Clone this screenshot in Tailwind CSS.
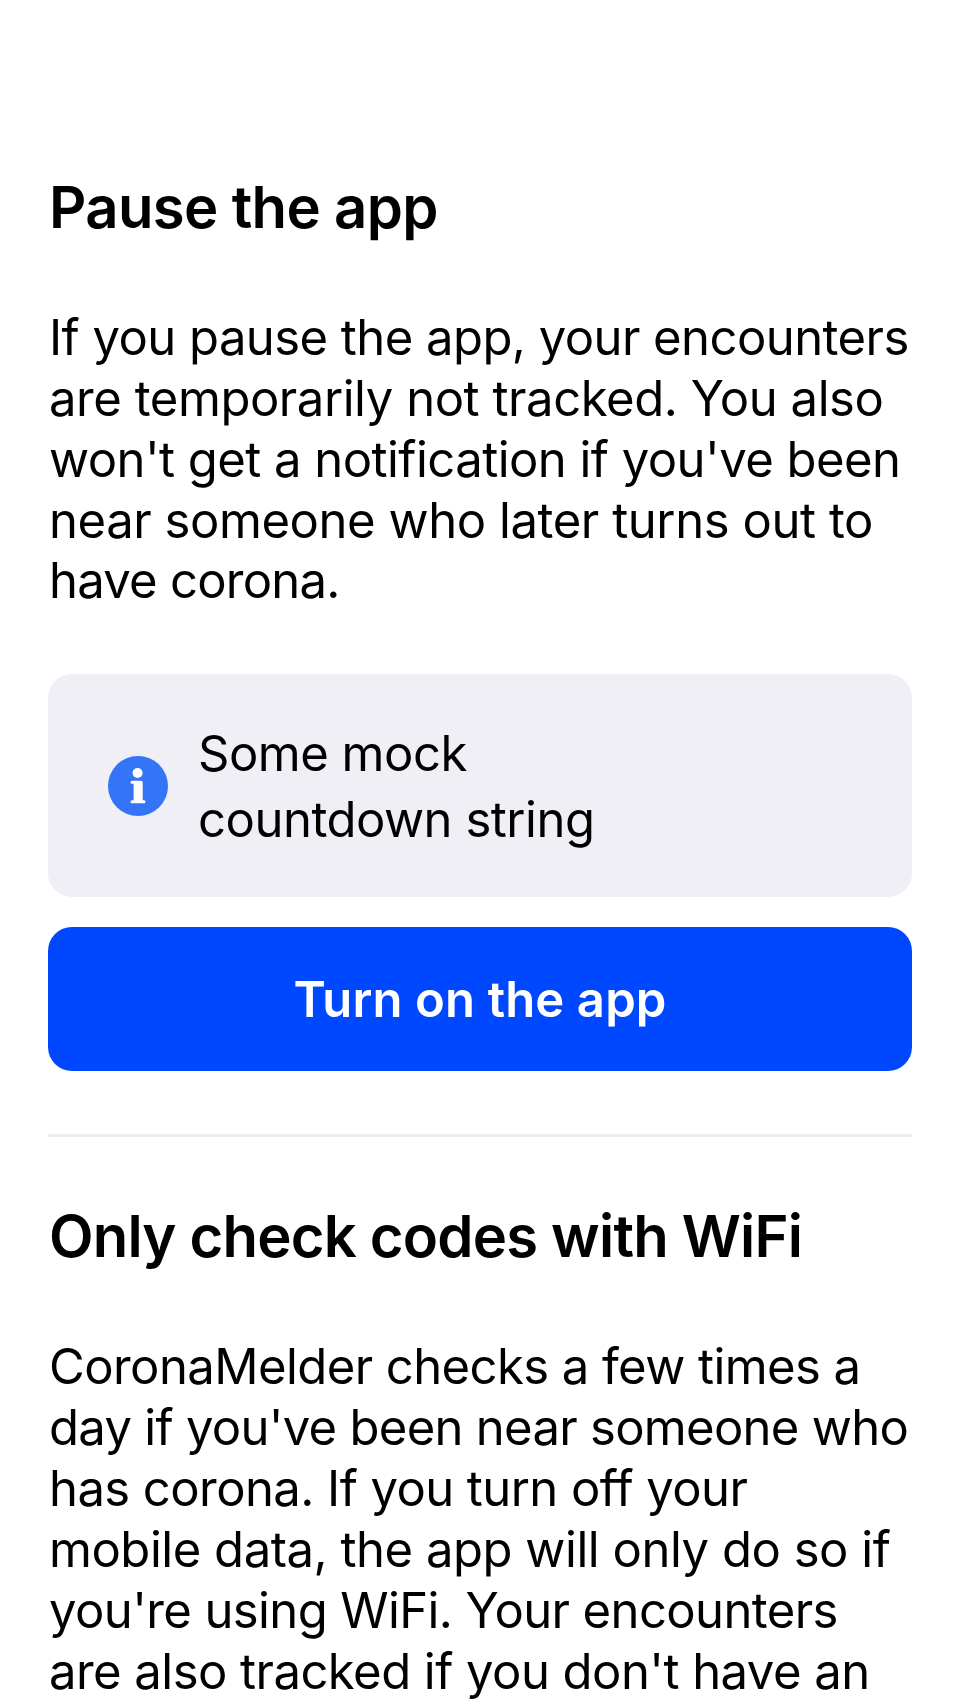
<!DOCTYPE html>
<html lang="en">
<head>
<meta charset="utf-8">
<title>Pause the app</title>
<script src="https://cdn.jsdelivr.net/npm/@tailwindcss/browser@4"></script>
</head>
<body class="bg-white">
<main class="flex h-[1704px] w-[960px] flex-col overflow-hidden bg-white px-12 pt-[172px] font-['Inter',sans-serif] text-[49px] leading-[61px] text-black">
  <section class="flex shrink-0 flex-col">
    <h1 class="whitespace-nowrap pl-px text-[58px] font-semibold leading-[70px] tracking-[-0.64px]">Pause the app</h1>
    <p class="mt-[65px] h-[304px] whitespace-nowrap pl-px">
      <span class="block tracking-[-0.55px]">If you pause the app, your encounters</span>
      <span class="block tracking-[-0.45px]">are temporarily not tracked. You also</span>
      <span class="block tracking-[-0.54px]">won't get a notification if you've been</span>
      <span class="block tracking-[-0.43px]">near someone who later turns out to</span>
      <span class="block leading-[60px] tracking-[-0.76px]">have corona.</span>
    </p>
    <div class="mt-[63px] flex h-[223px] items-center gap-[30px] rounded-3xl bg-[#f0eff5] pl-[60px]">
      <svg class="size-[60px] shrink-0" viewBox="0 0 60 60">
        <circle cx="30" cy="30" r="30" fill="#3474f6"/>
        <circle cx="29.6" cy="17" r="5" fill="#fff"/>
        <path fill="#fff" d="M24 24.7H33.2Q34.7 24.7 34.7 26.2V44.3H36A1.5 1.5 0 0 1 36 47.3H24A1.5 1.5 0 0 1 24 44.3H25.6V27.7H24A1.5 1.5 0 0 1 24 24.7Z"/>
      </svg>
      <p class="whitespace-nowrap pt-0.5 leading-[66px]">
        <span class="block tracking-[-0.5px]">Some mock</span>
        <span class="block tracking-[-0.48px]">countdown string</span>
      </p>
    </div>
    <button class="mt-[30px] flex h-36 items-center justify-center rounded-3xl bg-[#0048ff] font-semibold tracking-[0.13px] text-white">Turn on the app</button>
  </section>
  <hr class="mt-[63px] h-[3px] shrink-0 border-0 bg-[#eeeeee]">
  <section class="mt-16 flex shrink-0 flex-col">
    <h2 class="whitespace-nowrap pl-px text-[58px] font-semibold leading-[70px] tracking-[-0.79px]">Only check codes with WiFi</h2>
    <p class="mt-[65px] whitespace-nowrap pl-px">
      <span class="block tracking-[-0.57px]">CoronaMelder checks a few times a</span>
      <span class="block tracking-[-0.71px]">day if you've been near someone who</span>
      <span class="block tracking-[-0.57px]">has corona. If you turn off your</span>
      <span class="block tracking-[-0.47px]">mobile data, the app will only do so if</span>
      <span class="block tracking-[-0.6px]">you're using WiFi. Your encounters</span>
      <span class="block tracking-[-0.54px]">are also tracked if you don't have an</span>
    </p>
  </section>
</main>
</body>
</html>
